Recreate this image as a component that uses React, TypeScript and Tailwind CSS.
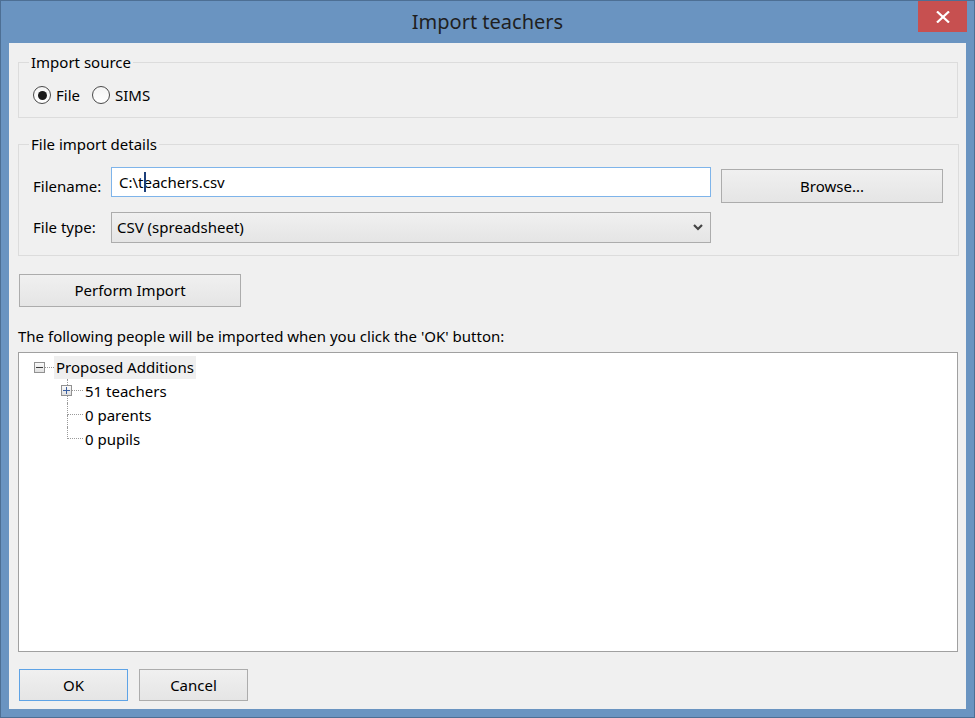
import React from 'react';

const font = { fontFamily: '"Noto Sans", "Open Sans", sans-serif' };

const Button = ({ label, className }: { label: string; className: string }) => (
    <button
        className={`flex items-center justify-center border bg-gradient-to-b from-[#f0f0f0] to-[#e5e5e5] text-[15px] text-black ${className}`}
    >
        {label}
    </button>
);

const Radio = ({ label, checked }: { label: string; checked?: boolean }) => (
    <label className="flex items-center gap-[5px]">
        <span className="flex h-[18px] w-[18px] items-center justify-center rounded-full border border-[#4a4a4a] bg-gradient-to-b from-[#f4f4f4] to-white">
            {checked && <span className="h-[9px] w-[9px] rounded-full bg-[#1a1a1a]" />}
        </span>
        <span className="text-[15px]">{label}</span>
    </label>
);

const App = () => {
    return (
        <div
            className="flex h-[718px] w-[975px] flex-col border border-[#4d6f94] bg-[#6a94c1] text-black"
            style={font}
        >
            {/* Title bar */}
            <div className="relative flex h-[42px] shrink-0 items-center justify-center">
                <span className="pb-[1px] text-[20px] text-[#1f1f1f]">Import teachers</span>
                <div className="absolute right-[7px] top-0 flex h-[31px] w-[49px] items-center justify-center bg-[#c75050]">
                    <svg width="14" height="12" viewBox="0 0 14 12">
                        <path d="M1 0.5 L13 11.5 M13 0.5 L1 11.5" stroke="white" strokeWidth="2.2" />
                    </svg>
                </div>
            </div>

            {/* Client area */}
            <div className="mx-[8px] mb-[8px] flex flex-1 flex-col bg-[#f0f0f0] pl-[9px] pr-[8px]">
                {/* Import source */}
                <fieldset className="mt-[9px] h-[66px] border border-[#dcdcdc] pl-[14px]">
                    <legend className="ml-[-4px] px-[2px] text-[15px] leading-[20px]">Import source</legend>
                    <div className="mt-[12px] flex items-center gap-[12px]">
                        <Radio label="File" checked />
                        <Radio label="SIMS" />
                    </div>
                </fieldset>

                {/* File import details */}
                <fieldset className="mt-[16px] h-[122px] border border-[#dcdcdc] pl-[14px] pr-[15px]">
                    <legend className="ml-[-4px] px-[2px] text-[15px] leading-[20px]">File import details</legend>
                    <div className="mt-[13px] flex items-start">
                        <span className="w-[78px] pt-[9px] text-[15px] leading-[20px]">Filename:</span>
                        <div className="relative flex h-[30px] w-[600px] items-center border border-[#7eb4ea] bg-white pl-[7px] text-[15px]">
                            C:\teachers.csv
                            <span className="absolute left-[32px] top-[4px] h-[20px] w-[2px] bg-[#1c3f7a]" />
                        </div>
                        <Button label="Browse..." className="ml-[10px] mt-[2px] h-[34px] w-[222px] border-[#acacac]" />
                    </div>
                    <div className="mt-[9px] flex items-center">
                        <span className="w-[78px] text-[15px]">File type:</span>
                        <div className="flex h-[31px] w-[600px] items-center justify-between border border-[#acacac] bg-gradient-to-b from-[#f0f0f0] to-[#e5e5e5] pl-[5px] pr-[7px] text-[15px]">
                            CSV (spreadsheet)
                            <svg width="10" height="7" viewBox="0 0 10 7">
                                <path d="M1 1 L5 5 L9 1" stroke="#444" strokeWidth="2.2" fill="none" />
                            </svg>
                        </div>
                    </div>
                </fieldset>

                <Button label="Perform Import" className="ml-[1px] mt-[18px] h-[33px] w-[222px] border-[#acacac]" />

                <div className="mt-[19px] text-[15px] leading-[20px]">
                    The following people will be imported when you click the 'OK' button:
                </div>

                {/* Tree */}
                <div className="mt-[6px] h-[300px] w-[940px] border border-[#a0a0a0] bg-white pt-[2px] text-[15px]">
                    <div className="flex h-[24px] items-center pl-[15px]">
                        <span className="flex h-[11px] w-[11px] items-center justify-center border border-[#919191] bg-gradient-to-b from-[#fafafa] to-[#e0e0e0]">
                            <span className="h-[1px] w-[7px] bg-[#3a3a3a]" />
                        </span>
                        <span className="w-[9px] border-t border-dotted border-[#9a9a9a]" />
                        <span className="flex h-[23px] items-center bg-[#efefef] px-[2px]">Proposed Additions</span>
                    </div>
                    {[
                        { label: '51 teachers', expand: true },
                        { label: '0 parents' },
                        { label: '0 pupils', last: true },
                    ].map((item) => (
                        <div key={item.label} className="flex h-[24px] items-center pl-[48px]">
                            <div className="relative flex h-[24px] w-[16px] flex-col">
                                <div className="h-[12px] border-b border-l border-dotted border-[#9a9a9a]" />
                                {!item.last && <div className="h-[12px] border-l border-dotted border-[#9a9a9a]" />}
                                {item.expand && (
                                    <span className="absolute left-[-6px] top-[6px] flex h-[11px] w-[11px] items-center justify-center border border-[#919191] bg-gradient-to-b from-[#fafafa] to-[#e0e0e0]">
                                        <svg width="7" height="7" viewBox="0 0 7 7">
                                            <path d="M0 3.5 H7 M3.5 0 V7" stroke="#3a5fa0" strokeWidth="1" />
                                        </svg>
                                    </span>
                                )}
                            </div>
                            <span className="pl-[2px]">{item.label}</span>
                        </div>
                    ))}
                </div>

                <div className="ml-[1px] mt-[17px] flex gap-[11px]">
                    <Button label="OK" className="h-[32px] w-[109px] border-[#5ea3e6]" />
                    <Button label="Cancel" className="h-[32px] w-[109px] border-[#acacac]" />
                </div>
            </div>
        </div>
    );
};

export default App;
